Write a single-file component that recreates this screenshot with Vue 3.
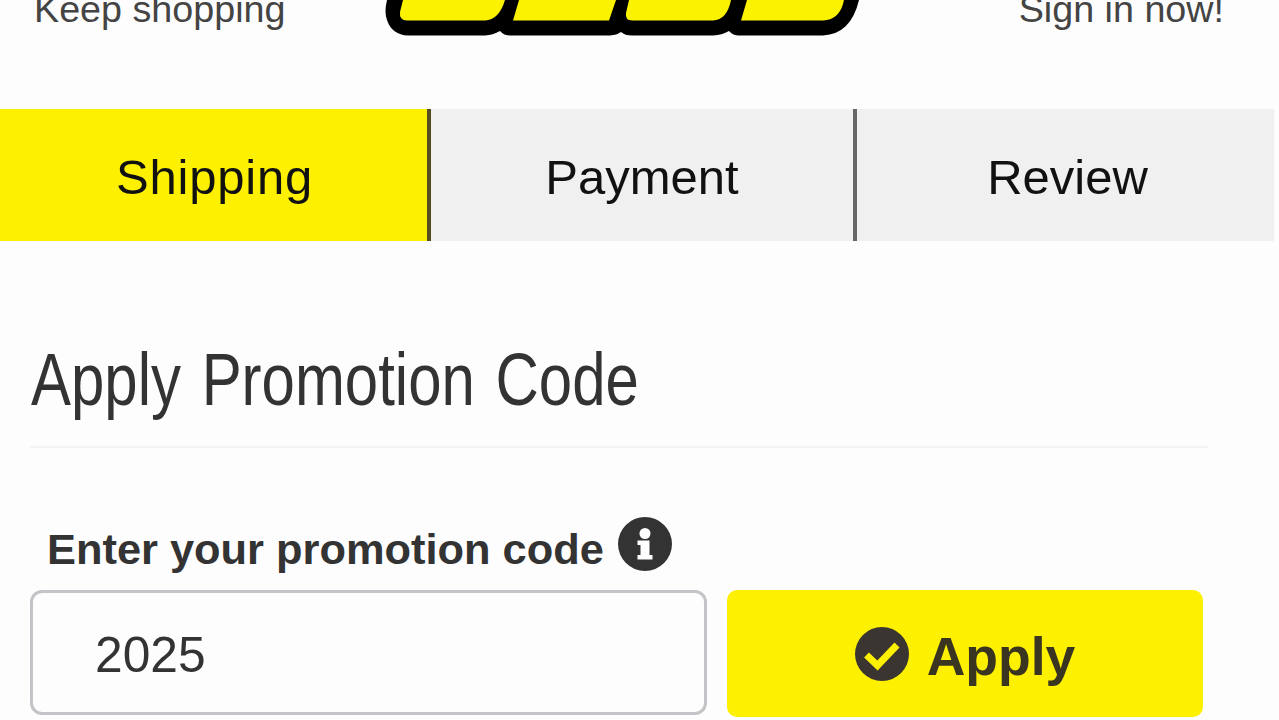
<template>
  <div class="checkout">
    <header class="top-bar">
      <a class="top-link">Keep shopping</a>
      <svg class="logo" width="480" height="40" viewBox="0 0 480 40">
        <path
          class="logo-outline"
          d="M7 0 Q4 12 7 20 Q12 35 28 35.500 H105 Q113 35 120 31 Q124 35.500 130 35.500 H230 Q237 35 241 32 Q245 35.500 252 35.500 H333 Q342 35 349 31 Q353 35.500 359 35.500 H443 Q471 34 479 0 Z"
        />
        <path class="logo-fill" d="M23 0 L20 12 Q19 20.500 27 20.500 H105 Q119 20 125 0 Z" />
        <path class="logo-fill" d="M139 0 L133 20.500 H229 L236 0 Z" />
        <path class="logo-fill" d="M249 0 L246 13 Q245 20.500 252 20.500 H333 Q347 20 351 0 Z" />
        <path class="logo-fill" d="M367 0 L361 20.500 H443 Q460 20 464 0 Z" />
      </svg>
      <a class="top-link">Sign in now!</a>
    </header>

    <nav class="steps">
      <div
        v-for="step in steps"
        :key="step"
        class="step"
        :class="{ active: step === currentStep }"
        @click="currentStep = step"
      >
        {{ step }}
      </div>
    </nav>

    <main class="promotion">
      <div class="title-row">
        <h1>Apply Promotion Code</h1>
      </div>

      <div class="label-row">
        <label for="promo">Enter your promotion code</label>
        <svg class="info-icon" width="54" height="54" viewBox="0 0 54 54">
          <circle cx="27" cy="27" r="27" fill="#333" />
          <circle cx="27" cy="16.500" r="5.500" fill="#fff" />
          <path d="M19.500 23.500 H31.500 V38 H34.500 V42.500 H19.500 V38 H22.500 V28 H19.500 Z" fill="#fff" />
        </svg>
      </div>

      <div class="form-row">
        <input id="promo" v-model="code" type="text" />
        <button type="button">
          <svg width="54" height="54" viewBox="0 0 54 54">
            <circle cx="27" cy="27" r="27" fill="#3a3530" />
            <path d="M11.500 28 L22.500 38.500 L42 18" fill="none" stroke="#fdf000" stroke-width="7" />
          </svg>
          <span>Apply</span>
        </button>
      </div>
    </main>
  </div>
</template>

<script setup>
import { ref } from 'vue';

const steps = ['Shipping', 'Payment', 'Review'];
const currentStep = ref('Shipping');
const code = ref('2025');
</script>

<style>
body {
  margin: 0;
  background: #fdfdfd;
}
</style>

<style scoped>
.checkout {
  height: 720px;
  overflow: hidden;
  background: #fdfdfd;
  color: #333;
  font-family: "Liberation Sans", Arial, sans-serif;
}

.top-bar {
  display: grid;
  grid-template-columns: 346px 480px 1fr;
  align-items: start;
  height: 109px;
  padding: 0 55px 0 34px;
  box-sizing: border-box;
}

.top-link {
  margin-top: -13px;
  font-size: 37.7px;
  line-height: 44px;
  color: #444;
  white-space: nowrap;
}

.top-link:last-child {
  text-align: right;
}

.logo {
  display: block;
}

.logo-outline {
  fill: #000;
}

.logo-fill {
  fill: #fbf200;
}

.steps {
  display: flex;
  height: 132px;
  padding-right: 5px;
}

.step {
  display: flex;
  align-items: center;
  justify-content: center;
  width: 426px;
  padding-top: 4px;
  box-sizing: border-box;
  background: #f0f0f0;
  border-right: 4px solid #666;
  color: #111;
  font-size: 49px;
}

.step.active {
  width: 431px;
  padding-left: 2px;
  background: #fdf000;
  border-right-color: #554c22;
  letter-spacing: 0.8px;
}

.step:last-child {
  flex: 1;
  padding-left: 4px;
  border-right: none;
}

.promotion {
  padding: 99px 71px 0 30px;
}

.title-row {
  height: 106px;
  border-bottom: 2px solid #f3f3f3;
}

h1 {
  display: inline-block;
  margin: 0 0 0 1px;
  font-size: 74px;
  font-weight: normal;
  line-height: 80px;
  word-spacing: 5px;
  white-space: nowrap;
  transform: scaleX(0.81);
  transform-origin: left;
}

.label-row {
  display: flex;
  align-items: flex-start;
  gap: 14px;
  height: 74px;
  padding: 68px 0 0 17px;
}

label {
  padding-top: 8px;
  font-size: 43.4px;
  font-weight: bold;
  line-height: 50px;
  white-space: nowrap;
}

.info-icon {
  margin-top: 1px;
}

.form-row {
  display: flex;
  align-items: flex-start;
  gap: 20px;
}

input {
  width: 677px;
  height: 125px;
  padding: 4px 62px 0;
  box-sizing: border-box;
  border: 3px solid #c4c4c8;
  border-radius: 12px;
  background: #fdfdfd;
  color: #333;
  font-family: inherit;
  font-size: 49.7px;
  outline: none;
}

button {
  display: flex;
  align-items: center;
  justify-content: center;
  gap: 18px;
  width: 476px;
  height: 127px;
  padding: 0;
  border: none;
  border-radius: 10px;
  background: #fdf000;
  color: #3a3520;
  font-family: inherit;
  font-size: 53.5px;
  font-weight: bold;
}

button span {
  padding-top: 5px;
}
</style>
